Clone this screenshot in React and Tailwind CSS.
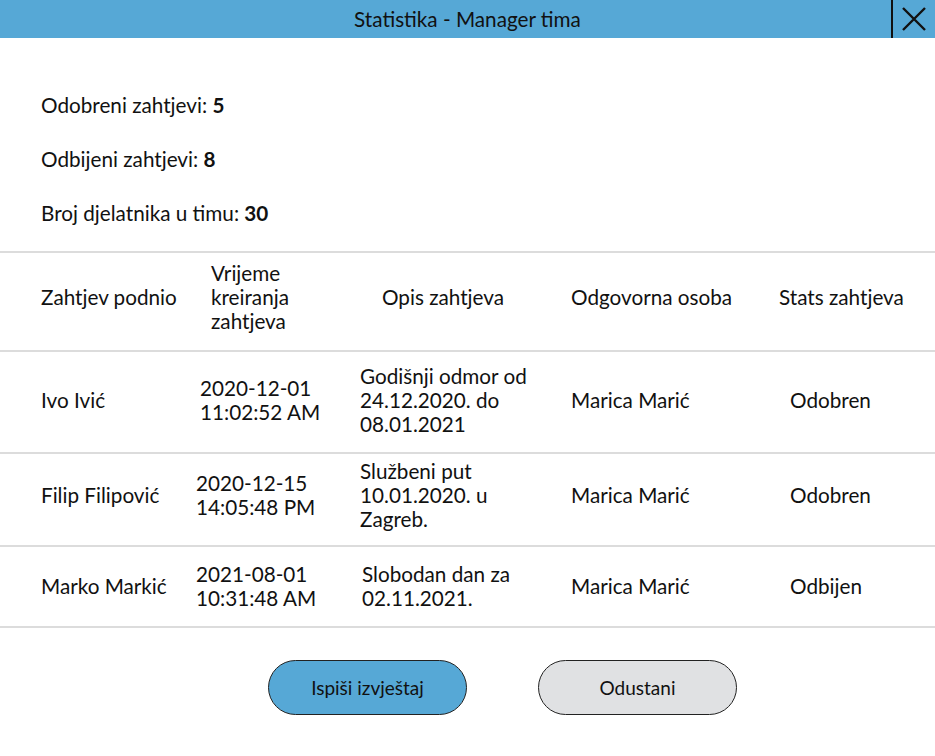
export default function App() {
  const rows = [
    {
      name: "Ivo Ivić",
      time: ["2020-12-01", "11:02:52 AM"],
      timePad: "pl-[10px]",
      desc: ["Godišnji odmor od", "24.12.2020. do", "08.01.2021"],
      descPad: "pl-0",
      status: "Odobren",
      h: "h-[102px] pb-[5px]",
    },
    {
      name: "Filip Filipović",
      time: ["2020-12-15", "14:05:48 PM"],
      timePad: "pl-[6px]",
      desc: ["Službeni put", "10.01.2020. u", "Zagreb."],
      descPad: "pl-0",
      status: "Odobren",
      h: "h-[93px] pb-[10px]",
    },
    {
      name: "Marko Markić",
      time: ["2021-08-01", "10:31:48 AM"],
      timePad: "pl-[6px]",
      desc: ["Slobodan dan za", "02.11.2021."],
      descPad: "pl-[2px]",
      status: "Odbijen",
      h: "h-[81px] pb-[2px]",
    },
  ];

  return (
    <div className="h-[756px] w-[935px] bg-white text-[20.7px] leading-[24px] text-[#111]" style={{ fontFamily: "Lato, 'Open Sans', sans-serif" }}>
      <div className="flex h-[38px] items-center bg-[#56a8d6]">
        <div className="flex-1 pl-[44px] text-center">Statistika - Manager tima</div>
        <div className="flex h-full w-[44px] items-center justify-center border-l-2 border-[#111]">
          <svg width="26" height="26" viewBox="0 0 26 26" fill="none" stroke="#111" strokeWidth="2.4">
            <path d="M2 2 L24 24 M24 2 L2 24" />
          </svg>
        </div>
      </div>

      <div className="flex flex-col gap-[30px] px-[41px] pt-[55px]">
        <div>Odobreni zahtjevi: <b>5</b></div>
        <div>Odbijeni zahtjevi: <b>8</b></div>
        <div>Broj djelatnika u timu: <b>30</b></div>
      </div>

      <div className="mt-[26px] border-t-2 border-[#dcdcdc]">
        <div className="grid h-[99px] grid-cols-[190px_170px_211px_208px_156px] items-center border-b-2 border-[#dcdcdc] pb-[10px]">
          <div className="pl-[41px]">Zahtjev podnio</div>
          <div className="pl-[21px]">Vrijeme<br />kreiranja<br />zahtjeva</div>
          <div className="pl-[22px]">Opis zahtjeva</div>
          <div>Odgovorna osoba</div>
          <div>Stats zahtjeva</div>
        </div>
        {rows.map((r) => (
          <div key={r.name} className={`grid ${r.h} grid-cols-[190px_170px_211px_208px_156px] items-center border-b-2 border-[#dcdcdc]`}>
            <div className="pl-[41px]">{r.name}</div>
            <div className={r.timePad}>
              {r.time.map((t) => <div key={t}>{t}</div>)}
            </div>
            <div className={r.descPad}>
              {r.desc.map((t) => <div key={t}>{t}</div>)}
            </div>
            <div>Marica Marić</div>
            <div className="pl-[11px]">{r.status}</div>
          </div>
        ))}
      </div>

      <div className="mt-[32px] flex gap-[71px] pl-[268px]">
        <button className="h-[55px] w-[199px] rounded-full border border-[#222] bg-[#56a8d6] text-[19px] text-[#111]">Ispiši izvještaj</button>
        <button className="h-[55px] w-[199px] rounded-full border border-[#222] bg-[#e0e1e3] text-[19px] text-[#111]">Odustani</button>
      </div>
    </div>
  );
}
